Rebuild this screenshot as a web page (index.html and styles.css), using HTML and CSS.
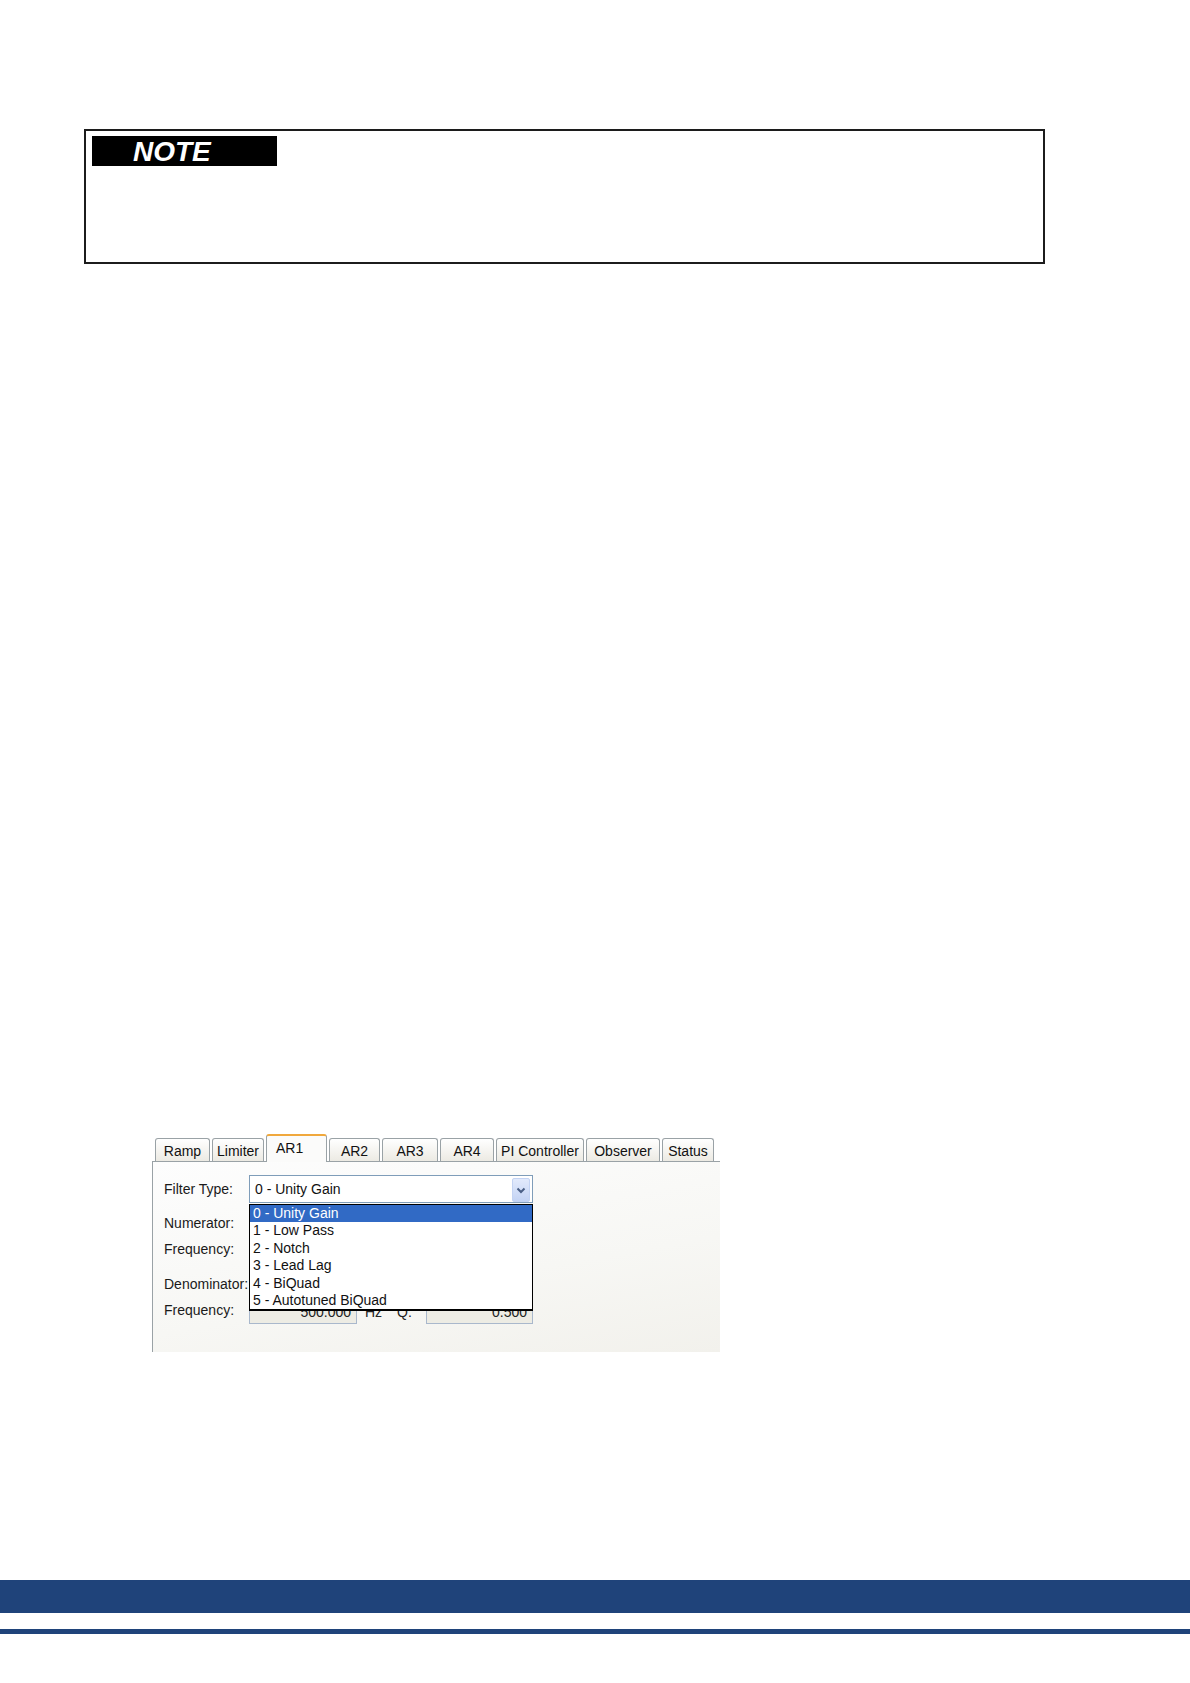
FILE: index.html
```html
<!DOCTYPE html>
<html lang="en">
<head>
<meta charset="utf-8">
<title>Filter Type</title>
<link rel="stylesheet" href="styles.css">
</head>
<body>
<div class="page">
  <div class="note">
    <div class="note-label"><span class="note-text">NOTE</span></div>
  </div>

  <div class="ui">
    <div class="tabs">
      <div class="tab">Ramp</div>
      <div class="tab">Limiter</div>
      <div class="tab active">AR1</div>
      <div class="tab">AR2</div>
      <div class="tab">AR3</div>
      <div class="tab">AR4</div>
      <div class="tab">PI Controller</div>
      <div class="tab">Observer</div>
      <div class="tab">Status</div>
    </div>
    <div class="panel">
      <div class="row row-filter">
        <span class="lbl">Filter Type:</span>
        <div class="combo">
          <span class="combo-text">0 - Unity Gain</span>
          <span class="combo-btn">
            <svg width="10" height="7" viewBox="0 0 10 7"><path d="M1.5 1.5 L5 5 L8.5 1.5" fill="none" stroke="#4a5f86" stroke-width="2"/></svg>
          </span>
        </div>
      </div>
      <div class="row row-head1"><span class="lbl">Numerator:</span></div>
      <div class="row row-field1">
        <span class="lbl">Frequency:</span>
        <div class="field"></div>
        <div class="field field2 field-gap"></div>
      </div>
      <div class="row row-head2"><span class="lbl">Denominator:</span></div>
      <div class="row row-field2">
        <span class="lbl">Frequency:</span>
        <div class="field">500.000</div>
        <span class="unit">Hz</span>
        <span class="q">Q:</span>
        <div class="field field2">0.500</div>
      </div>

      <ul class="dropdown">
        <li class="selected">0 - Unity Gain</li>
        <li>1 - Low Pass</li>
        <li>2 - Notch</li>
        <li>3 - Lead Lag</li>
        <li>4 - BiQuad</li>
        <li>5 - Autotuned BiQuad</li>
      </ul>
    </div>
  </div>

  <div class="footer">
    <div class="footer-bar"></div>
    <div class="footer-line"></div>
  </div>
</div>
</body>
</html>
```

FILE: styles.css
```css
html, body {
  margin: 0;
  padding: 0;
  background: #ffffff;
}

.page {
  width: 1190px;
  height: 1683px;
  overflow: hidden;
  font-family: "Liberation Sans", Arial, sans-serif;
  color: #1a1a1a;
}

/* NOTE box */
.note {
  box-sizing: border-box;
  margin: 129px 0 0 84px;
  width: 961px;
  height: 135px;
  border: 2px solid #1c1c1c;
  padding: 5px 0 0 6px;
}

.note-label {
  width: 185px;
  height: 30px;
  background: #000000;
  box-sizing: border-box;
  padding-left: 41px;
}

.note-text {
  display: block;
  color: #ffffff;
  font-family: "Liberation Sans", Arial, sans-serif;
  font-weight: bold;
  font-style: italic;
  font-size: 28px;
  line-height: 31px;
}

/* Tab control */
.ui {
  margin: 870px 0 0 152px;
  width: 568px;
  font-size: 14px;
}

.tabs {
  height: 27px;
  display: grid;
  grid-template-columns: 55px 52px 61px 51px 56px 54px 88px 74px 52px;
  column-gap: 2px;
  align-items: end;
  padding-left: 3px;
  position: relative;
  z-index: 1;
}

.tab {
  box-sizing: border-box;
  height: 23px;
  border: 1px solid #9aa2a6;
  border-bottom: none;
  border-radius: 3px 3px 0 0;
  background: linear-gradient(#ffffff, #eceae3);
  text-align: center;
  padding-top: 4px;
  line-height: 16px;
  color: #111;
  white-space: nowrap;
}

.tab.active {
  height: 28px;
  margin-bottom: -1px;
  background: #fbfbfa;
  border-top: 2px solid #f0a83c;
  padding-top: 4px;
  text-align: left;
  padding-left: 9px;
}

.panel {
  position: relative;
  box-sizing: border-box;
  height: 191px;
  border-top: 1px solid #9aa2a6;
  border-left: 1px solid #9aa2a6;
  background: linear-gradient(170deg, #fdfdfd 0%, #f7f7f4 60%, #f2f1ec 100%);
  padding: 13px 0 0 11px;
}

.row {
  display: flex;
  align-items: center;
}

.lbl {
  width: 85px;
  flex: 0 0 85px;
  line-height: 16px;
  white-space: nowrap;
  color: #1a1a1a;
}

.row-filter { height: 28px; }
.row-head1 { margin-top: 12px; height: 16px; }
.row-field1 { margin-top: 6px; height: 24px; }
.row-head2 { margin-top: 15px; height: 16px; }
.row-field2 { margin-top: 8px; height: 24px; }
.row-field2 .lbl { position: relative; top: -2px; }

.combo {
  box-sizing: border-box;
  width: 284px;
  height: 28px;
  border: 1px solid #7f9db9;
  background: #ffffff;
  display: flex;
  align-items: center;
  padding: 0 2px 0 5px;
}

.combo-text {
  flex: 1;
  line-height: 16px;
  color: #111;
}

.combo-btn {
  box-sizing: border-box;
  width: 18px;
  height: 24px;
  margin-top: 2px;
  border-radius: 2px;
  border: 1px solid #c3d3f3;
  background: linear-gradient(#e2eafc, #c3d3f4);
  display: flex;
  align-items: center;
  justify-content: center;
}

.field {
  box-sizing: border-box;
  width: 108px;
  height: 24px;
  border: 1px solid #a9b8cc;
  background: #edece4;
  text-align: right;
  padding-right: 5px;
  line-height: 22px;
  color: #222;
}

.field.field2 { width: 107px; }
.field.field-gap { margin-left: 69px; }

.unit {
  margin-left: 8px;
  width: 17px;
  color: #222;
}

.q {
  margin-left: 15px;
  width: 29px;
  color: #222;
}

/* Open dropdown list (overlay) */
.dropdown {
  position: absolute;
  left: 96px;
  top: 42px;
  z-index: 2;
  box-sizing: border-box;
  width: 284px;
  margin: 0;
  padding: 0;
  list-style: none;
  background: #ffffff;
  border: 1px solid #000000;
  border-bottom-width: 2px;
  font-size: 14px;
}

.dropdown li {
  height: 17.4px;
  line-height: 17.4px;
  padding-left: 3px;
  color: #111;
  white-space: nowrap;
}

.dropdown li.selected {
  background: #316ac5;
  color: #ffffff;
}

/* Footer */
.footer {
  margin-top: 228px;
}

.footer-bar {
  height: 33px;
  background: #1f437a;
}

.footer-line {
  margin-top: 16px;
  height: 5px;
  background: #1f437a;
}
```
